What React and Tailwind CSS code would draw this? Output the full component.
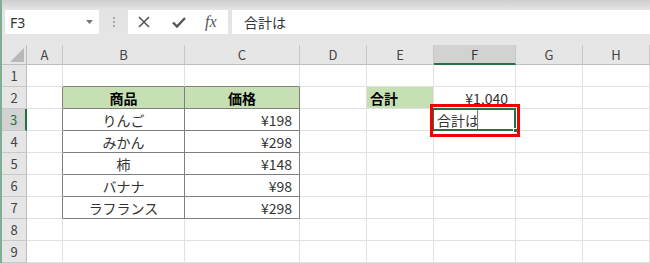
import React from 'react';

const cols = [
  { key: 'A', w: 36 },
  { key: 'B', w: 122 },
  { key: 'C', w: 115 },
  { key: 'D', w: 67 },
  { key: 'E', w: 67 },
  { key: 'F', w: 82 },
  { key: 'G', w: 67 },
  { key: 'H', w: 67 },
];

// cell contents: [text, align, bold, fill]
const cells = {
  B2: ['商品', 'center', true, true],
  C2: ['価格', 'center', true, true],
  E2: ['合計', 'left', true, true],
  F2: ['¥1,040', 'right'],
  B3: ['りんご', 'center'],
  C3: ['¥198', 'right'],
  B4: ['みかん', 'center'],
  C4: ['¥298', 'right'],
  B5: ['柿', 'center'],
  C5: ['¥148', 'right'],
  B6: ['バナナ', 'center'],
  C6: ['¥98', 'right'],
  B7: ['ラフランス', 'center'],
  C7: ['¥298', 'right'],
};

const inTable = (c, r) => (c === 'B' || c === 'C') && r >= 2 && r <= 7;

const Cell = ({ c, r }) => {
  const id = c + r;
  const data = cells[id];
  // table borders are darker than gridlines
  const darkRight = inTable(c, r) || (c === 'A' && r >= 2 && r <= 7);
  const darkBottom = inTable(c, r) || ((c === 'B' || c === 'C') && r === 1);
  const fill = data && data[3];

  let align = 'justify-center';
  if (data && data[1] === 'right') align = 'justify-end pr-[7px]';
  if (data && data[1] === 'left') align = 'justify-start pl-[3px]';

  return (
    <div
      className={`relative flex items-center border-r border-b ${
        darkRight ? 'border-r-[#7f7f7f]' : 'border-r-[#e1e1e1]'
      } ${darkBottom ? 'border-b-[#7f7f7f]' : 'border-b-[#e1e1e1]'} ${
        fill ? 'bg-[#c6e0b4]' : 'bg-white'
      } ${align} text-[14px] leading-none text-[#333]`}
    >
      {data && <span className={data[2] ? 'font-bold text-black' : ''}>{data[0]}</span>}
      {id === 'F3' && (
        <>
          <span className="absolute left-[3px] top-1/2 -translate-y-1/2">合計は</span>
          <div className="absolute left-[43px] top-0 bottom-0 w-px bg-[#7a7a7a]" />
          <div className="absolute -left-[2px] -top-[1px] -right-[1px] -bottom-[1px] border-2 border-[#217346] z-10" />
          <div className="absolute -right-[3px] -bottom-[3px] w-[5px] h-[5px] bg-[#217346] border border-white z-10" />
          <div className="absolute -left-[4px] -top-[5px] w-[90px] h-[33px] border-[3px] border-[#f50000] z-20" />
        </>
      )}
    </div>
  );
};

const App = () => {
  const rows = [1, 2, 3, 4, 5, 6, 7, 8, 9];
  return (
    <div className="w-[650px] h-[263px] overflow-hidden bg-[#e6e6e6] border-l-2 border-[#7fae94] font-['Noto_Sans_CJK_JP',sans-serif]">
      {/* formula bar */}
      <div className="h-[45px] pt-[10px] bg-gradient-to-b from-[#cdcdcd] via-[#e3e3e3] via-[20%] to-[#e6e6e6]">
        <div className="flex items-center h-[24px] pl-[3px]">
          <div className="w-[94px] h-full bg-white flex items-center justify-between pl-[5px] pr-[6px]">
            <span className="text-[14px] text-[#333] font-['Noto_Sans',sans-serif]">F3</span>
            <svg width="7" height="4" viewBox="0 0 7 4">
              <path d="M0 0h7L3.5 4z" fill="#777" />
            </svg>
          </div>
          <div className="w-[29px] h-full flex flex-col items-center justify-center gap-[2px]">
            <span className="w-[2px] h-[2px] bg-[#aaa]" />
            <span className="w-[2px] h-[2px] bg-[#aaa]" />
            <span className="w-[2px] h-[2px] bg-[#aaa]" />
          </div>
          <div className="w-[100px] h-full bg-white flex items-center pl-[10px] gap-[19px] text-[#555]">
            <svg width="12" height="12" viewBox="0 0 12 12">
              <path d="M1 1l10 10M11 1L1 11" stroke="#555" strokeWidth="1.6" />
            </svg>
            <svg width="14" height="12" viewBox="0 0 14 12" className="ml-[3px]">
              <path d="M1 6.5l4 4L13 2" stroke="#555" strokeWidth="2.4" fill="none" />
            </svg>
            <span className="font-['Liberation_Serif',serif] italic text-[16px] leading-none text-[#555]">fx</span>
          </div>
          <div className="ml-[4px] flex-1 h-full bg-white flex items-center pl-[12px] text-[14px] text-[#333]">
            合計は
          </div>
        </div>
      </div>

      {/* sheet grid */}
      <div className="grid grid-cols-[25px_36px_122px_115px_67px_67px_82px_67px_67px] grid-rows-[20px_repeat(9,22px)]">
        <div className="relative bg-[#e6e6e6] border-r border-b border-[#bdbdbd]">
          <svg width="14" height="14" viewBox="0 0 14 14" className="absolute right-[2px] bottom-[2px]">
            <path d="M14 0V14H0z" fill="#b8b8b8" />
          </svg>
        </div>
        {cols.map((col) => (
          <div
            key={col.key}
            className={`flex items-center justify-center border-r border-[#c8c8c8] text-[13px] leading-none ${
              col.key === 'F'
                ? 'bg-[#d2d2d2] border-b-2 border-b-[#217346] text-[#333]'
                : 'bg-[#e6e6e6] border-b border-b-[#bdbdbd] text-[#444]'
            }`}
          >
            {col.key}
          </div>
        ))}
        {rows.map((r) => (
          <React.Fragment key={r}>
            <div
              className={`flex items-center justify-center border-b border-[#c8c8c8] text-[13px] leading-none ${
                r === 3
                  ? 'bg-[#d2d2d2] border-r-2 border-r-[#217346] text-[#217346]'
                  : 'bg-[#e6e6e6] border-r border-r-[#bdbdbd] text-[#444]'
              }`}
            >
              {r}
            </div>
            {cols.map((col) => (
              <Cell key={col.key + r} c={col.key} r={r} />
            ))}
          </React.Fragment>
        ))}
      </div>
    </div>
  );
};

export default App;
